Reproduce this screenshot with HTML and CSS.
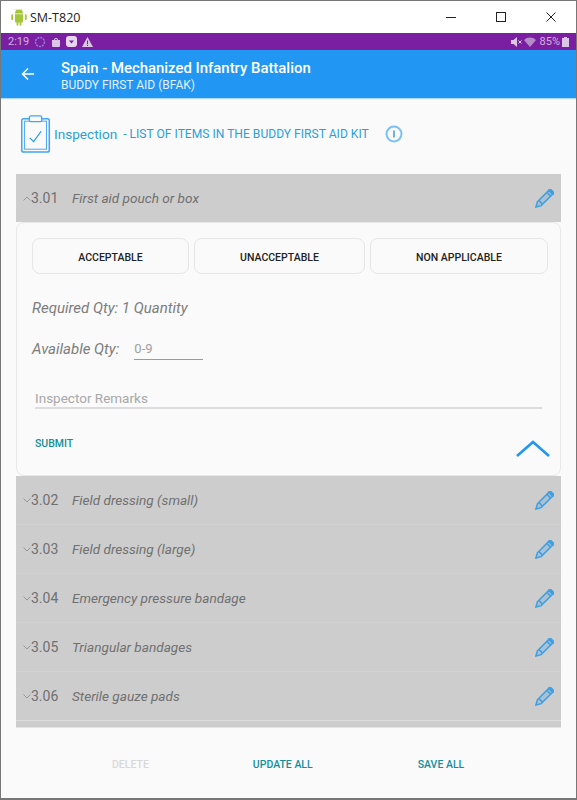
FILE: index.html
```html
<!DOCTYPE html>
<html lang="en">
<head>
    <meta charset="UTF-8">
    <meta name="viewport" content="width=device-width, initial-scale=1.0">
    <title>SM-T820</title>
    <link rel="stylesheet" href="styles.css">
</head>
<body>

<div class="window">
    <div class="titlebar">
        <svg class="android-logo" viewBox="0 0 16 18" width="16" height="18">
            <path fill="#a4c639" d="M4 5.6a4 4 0 0 1 8 0zM4 6.3h8v7.2a1 1 0 0 1-1 1h-.6v2.3a.9.9 0 0 1-1.8 0v-2.3H7.4v2.3a.9.9 0 0 1-1.8 0v-2.3H5a1 1 0 0 1-1-1zM1.2 6.3a.9.9 0 0 1 .9.9v4a.9.9 0 0 1-1.8 0v-4a.9.9 0 0 1 .9-.9zM14.8 6.3a.9.9 0 0 1 .9.9v4a.9.9 0 0 1-1.8 0v-4a.9.9 0 0 1 .9-.9z"/>
            <path stroke="#a4c639" stroke-width=".6" d="M5.6 2.6 4.8.8M10.4 2.6l.8-1.8"/>
        </svg>
        <span class="window-title">SM-T820</span>
        <div class="window-controls">
            <svg viewBox="0 0 10 10" width="10" height="10"><path stroke="#222" d="M0 5.5h10"/></svg>
            <svg viewBox="0 0 10 10" width="10" height="10"><rect x=".5" y=".5" width="9" height="9" fill="none" stroke="#222"/></svg>
            <svg viewBox="0 0 10 10" width="10" height="10"><path stroke="#222" d="M.5.5l9 9M9.5.5l-9 9"/></svg>
        </div>
    </div>

    <div class="statusbar">
        <div class="status-left">
            <span>2:19</span>
            <svg viewBox="0 0 12 12" width="12" height="12"><circle cx="6" cy="6" r="4.5" fill="none" stroke="#8f7fdc" stroke-width="1.5" stroke-dasharray="2 1"/></svg>
            <svg viewBox="0 0 10 10" width="10" height="10"><path fill="#dcc6e6" d="M1 3h8v6a1 1 0 0 1-1 1H2a1 1 0 0 1-1-1zM3 3a2 2 0 0 1 4 0H6a1 1 0 0 0-2 0z"/></svg>
            <svg viewBox="0 0 11 11" width="11" height="11"><rect width="11" height="11" rx="3" fill="#e6d6ee"/><path fill="#7b1fa2" d="M3 4.5h5L5.5 7.5z"/></svg>
            <svg viewBox="0 0 11 10" width="11" height="10"><path fill="#dcc6e6" d="M5.5 0 11 10H0z"/><path stroke="#7b1fa2" d="M5.5 3.5V7M5.5 7.8V9"/></svg>
        </div>
        <div class="status-right">
            <svg viewBox="0 0 11 10" width="11" height="10"><path fill="#dcc6e6" d="M0 3h2.500L6 0v10L2.500 7H0z"/><path stroke="#dcc6e6" d="M7.500 3.500l3 3M10.500 3.500l-3 3"/></svg>
            <svg viewBox="0 0 12 10" width="12" height="10"><path fill="#b48cc8" d="M0 3a8.500 8.500 0 0 1 12 0L6 10z"/></svg>
            <span class="battery-text">85%</span>
            <svg viewBox="0 0 7 10" width="7" height="10"><path fill="#dcc6e6" d="M2 0h3v1h2v9H0V1h2z"/></svg>
        </div>
    </div>

    <div class="appbar">
        <svg class="back-arrow" viewBox="0 0 14 14" width="14" height="14"><path fill="none" stroke="#fff" stroke-width="1.5" d="M13 7H2M7 1.500 1.500 7 7 12.500"/></svg>
        <div class="appbar-text">
            <div class="appbar-title">Spain - Mechanized Infantry Battalion</div>
            <div class="appbar-sub">BUDDY FIRST AID (BFAK)</div>
        </div>
    </div>

    <div class="content">
        <div class="heading">
            <svg class="clipboard" viewBox="0 0 32 40" width="32" height="38">
                <rect x="1" y="4" width="29" height="35" rx="2" fill="none" stroke="#42a5f5" stroke-width="1.6"/>
                <rect x="4" y="6.500" width="23" height="29.500" fill="none" stroke="#42a5f5" stroke-width="1"/>
                <rect x="9" y="1" width="13" height="6" rx="1.500" fill="#fafafa" stroke="#42a5f5" stroke-width="1.4"/>
                <path fill="none" stroke="#2196f3" stroke-width="1.1" d="M9.500 24l4 4 8-11"/>
            </svg>
            <span class="heading-main">Inspection</span>
            <span class="heading-sub">- LIST OF ITEMS IN THE BUDDY FIRST AID KIT</span>
            <svg class="info-icon" viewBox="0 0 18 18" width="18" height="18">
                <circle cx="9" cy="9" r="7.500" fill="none" stroke="#7cc0f5" stroke-width="2"/>
                <path stroke="#4a9fe0" stroke-width="1.6" d="M9 5.500v7"/>
            </svg>
        </div>

        <div class="item-list">
            <div class="item">
                <svg class="chevron" viewBox="0 0 8 5" width="8" height="5"><path fill="none" stroke="#8a8a8a" stroke-width=".8" d="M.5 4.500 4 1l3.500 3.500"/></svg>
                <span class="item-no">3.01</span>
                <span class="item-name">First aid pouch or box</span>
                <svg class="pencil" viewBox="0 0 20 20" width="19" height="19"><use href="#pencil-shape"/></svg>
            </div>

            <div class="card">
                <div class="choice-row">
                    <button class="choice choice-a">ACCEPTABLE</button>
                    <button class="choice choice-b">UNACCEPTABLE</button>
                    <button class="choice choice-c">NON APPLICABLE</button>
                </div>
                <p class="qty">Required Qty: 1 Quantity</p>
                <div class="available">
                    <span class="qty">Available Qty:</span>
                    <span class="qty-input">0-9</span>
                </div>
                <div class="remarks">Inspector Remarks</div>
                <div class="card-foot">
                    <span class="submit">SUBMIT</span>
                    <svg class="collapse" viewBox="0 0 34 18" width="34" height="18"><path fill="none" stroke="#2196f3" stroke-width="2.6" d="M1 16 17 2l16 14"/></svg>
                </div>
            </div>

            <div class="item item-closed">
                <svg class="chevron" viewBox="0 0 8 5" width="8" height="5"><path fill="none" stroke="#8a8a8a" stroke-width=".8" d="M.5.500 4 4 7.500.500"/></svg>
                <span class="item-no">3.02</span>
                <span class="item-name">Field dressing (small)</span>
                <svg class="pencil" viewBox="0 0 20 20" width="19" height="19"><use href="#pencil-shape"/></svg>
            </div>
            <div class="item item-closed">
                <svg class="chevron" viewBox="0 0 8 5" width="8" height="5"><path fill="none" stroke="#8a8a8a" stroke-width=".8" d="M.5.500 4 4 7.500.500"/></svg>
                <span class="item-no">3.03</span>
                <span class="item-name">Field dressing (large)</span>
                <svg class="pencil" viewBox="0 0 20 20" width="19" height="19"><use href="#pencil-shape"/></svg>
            </div>
            <div class="item item-closed">
                <svg class="chevron" viewBox="0 0 8 5" width="8" height="5"><path fill="none" stroke="#8a8a8a" stroke-width=".8" d="M.5.500 4 4 7.500.500"/></svg>
                <span class="item-no">3.04</span>
                <span class="item-name">Emergency pressure bandage</span>
                <svg class="pencil" viewBox="0 0 20 20" width="19" height="19"><use href="#pencil-shape"/></svg>
            </div>
            <div class="item item-closed">
                <svg class="chevron" viewBox="0 0 8 5" width="8" height="5"><path fill="none" stroke="#8a8a8a" stroke-width=".8" d="M.5.500 4 4 7.500.500"/></svg>
                <span class="item-no">3.05</span>
                <span class="item-name">Triangular bandages</span>
                <svg class="pencil" viewBox="0 0 20 20" width="19" height="19"><use href="#pencil-shape"/></svg>
            </div>
            <div class="item item-closed">
                <svg class="chevron" viewBox="0 0 8 5" width="8" height="5"><path fill="none" stroke="#8a8a8a" stroke-width=".8" d="M.5.500 4 4 7.500.500"/></svg>
                <span class="item-no">3.06</span>
                <span class="item-name">Sterile gauze pads</span>
                <svg class="pencil" viewBox="0 0 20 20" width="19" height="19"><use href="#pencil-shape"/></svg>
            </div>
            <div class="item-peek"></div>
        </div>

        <div class="actions">
            <span class="action action-off">DELETE</span>
            <span class="action">UPDATE ALL</span>
            <span class="action">SAVE ALL</span>
        </div>
    </div>
</div>

<svg class="defs" width="0" height="0">
    <defs>
        <g id="pencil-shape" fill="rgba(63,159,227,0.25)" stroke="#3f9fe3" stroke-width="1.6">
            <path d="M1 19l1.500-5.500L14.500 1.500l4 4L6.500 17.500z"/>
            <path d="M4 12l4 4M12.500 3.500l4 4"/>
            <path fill="#3f9fe3" d="M15 1l1.500-.5 3 3L19 5z"/>
        </g>
    </defs>
</svg>

</body>
</html>
```

FILE: styles.css
```css
* {
    box-sizing: border-box;
}
html, body {
    margin: 0;
    padding: 0;
}
body {
    width: 577px;
    height: 800px;
    overflow: hidden;
    font-family: Roboto, sans-serif;
    background: #fafafa;
}
.window {
    height: 800px;
    display: flex;
    flex-direction: column;
    border: 1px solid #777;
    border-bottom-width: 2px;
    background: #fafafa;
}
.defs {
    position: absolute;
}

/* title bar */
.titlebar {
    height: 32px;
    flex: none;
    display: flex;
    align-items: center;
    background: #fff;
    padding-left: 10px;
}
.window-title {
    font-family: "Open Sans", sans-serif;
    font-size: 12.5px;
    color: #222;
    margin-left: 3px;
}
.window-controls {
    margin-left: auto;
    display: flex;
    gap: 40px;
    padding-right: 20px;
}
.statusbar {
    height: 17px;
    flex: none;
    display: flex;
    justify-content: space-between;
    align-items: center;
    background: #7b1fa2;
    color: #d0b2df;
    font-size: 11px;
    padding: 0 7px;
}
.status-left, .status-right {
    display: flex;
    align-items: center;
    gap: 5px;
}
.status-right {
    gap: 2px;
}
.battery-text {
    margin-left: 2px;
}

/* app bar */
.appbar {
    height: 48px;
    flex: none;
    display: flex;
    align-items: center;
    background: #2196f3;
    color: #fff;
    padding-left: 20px;
    box-shadow: 0 1px 1px rgba(33,150,243,0.35);
}
.back-arrow {
    margin-right: 26px;
}
.appbar-text {
    margin-top: 5px;
}
.appbar-title {
    font-size: 14.9px;
    font-weight: 500;
    line-height: 17px;
}
.appbar-sub {
    font-size: 12px;
    line-height: 17px;
    color: #e3f2fd;
}

.content {
    flex: 1;
    display: flex;
    flex-direction: column;
    padding: 0 15px;
}
.heading {
    height: 76px;
    flex: none;
    display: flex;
    align-items: center;
    padding-left: 4px;
    padding-bottom: 4px;
}
.clipboard {
    margin-right: 2px;
}
.heading-main {
    font-size: 13.6px;
    color: #2a9fd8;
    margin-right: 6px;
}
.heading-sub {
    font-size: 12.1px;
    color: #2a9fd8;
}
.info-icon {
    margin-left: 16px;
}

/* items */
.item-list {
    display: flex;
    flex-direction: column;
    height: 554px;
    flex: none;
}
.item {
    height: 48px;
    flex: none;
    display: flex;
    align-items: center;
    background: #cdcdcd;
    padding-left: 7px;
    padding-right: 7px;
    color: #707070;
}
.item-closed {
    height: 49px;
    border-bottom: 1px solid #d2d2d2;
}
.item-closed:nth-last-child(2) {
    border-bottom-color: #dedede;
}
.chevron {
    flex: none;
}
.item-no {
    font-size: 14px;
    width: 41px;
}
.item-name {
    font-size: 13.6px;
    font-style: italic;
}
.pencil {
    margin-left: auto;
}
.item-peek {
    flex: 1;
    background: #cdcdcd;
    border-bottom: 1px solid #e4e4e4;
}

/* open card */
.card {
    height: 254px;
    flex: none;
    background: #fafafa;
    border: 1px solid #e8e8e8;
    border-radius: 8px;
    padding: 15px 12px 0 15px;
    display: flex;
    flex-direction: column;
}
.choice-row {
    display: flex;
    gap: 5px;
}
.choice {
    height: 36px;
    background: #fafafa;
    border: 1px solid #e6e6e6;
    border-radius: 8px;
    font-family: Roboto, sans-serif;
    font-size: 10.5px;
    font-weight: 500;
    color: #222;
    padding: 2px 0 0;
}
.choice-a {
    width: 157px;
}
.choice-b {
    width: 171px;
}
.choice-c {
    width: 178px;
}
.qty {
    font-size: 15px;
    font-style: italic;
    color: #7d7d7d;
    margin: 0;
}
.card > .qty {
    margin-top: 25px;
    line-height: 18px;
}
.available {
    display: flex;
    align-items: flex-start;
    margin-top: 22px;
    gap: 15px;
}
.available .qty {
    line-height: 20px;
}
.qty-input {
    width: 69px;
    height: 21px;
    font-size: 13px;
    color: #a0a0a0;
    border-bottom: 1px solid #9a9a9a;
    padding-top: 2px;
}
.remarks {
    margin: 28px 6px 0 3px;
    height: 21px;
    font-size: 13.5px;
    color: #a8a8a8;
    border-bottom: 2px solid #dcdcdc;
    padding-top: 2px;
}
.card-foot {
    display: flex;
    justify-content: space-between;
    align-items: flex-start;
    margin: 28px -2px 0 3px;
}
.submit {
    font-size: 10.5px;
    font-weight: 500;
    color: #128f9a;
}
.collapse {
    margin-top: 3px;
}

/* bottom buttons */
.actions {
    flex: 1;
    display: flex;
    align-items: center;
    font-size: 10.5px;
    font-weight: 500;
    color: #128f9a;
    padding-top: 2px;
}
.action:nth-child(1) {
    margin-left: 96px;
}
.action:nth-child(2) {
    margin-left: 104px;
}
.action:nth-child(3) {
    margin-left: 105px;
}
.action-off {
    color: #d8d8d8;
}
```
